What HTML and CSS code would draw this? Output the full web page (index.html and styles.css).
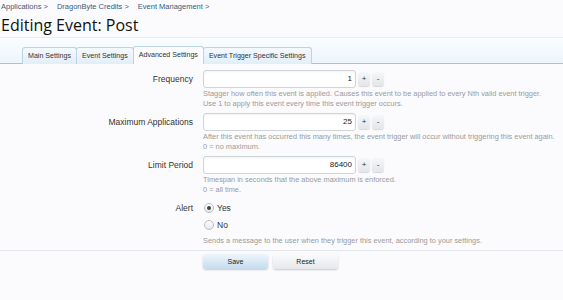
FILE: index.html
```html
<!DOCTYPE html>
<html>
<head>
<meta charset="utf-8">
<link rel="stylesheet" href="styles.css">
</head>
<body>
<div class="crumbs">
  <span>Applications &gt;</span>
  <span>DragonByte Credits &gt;</span>
  <span>Event Management &gt;</span>
</div>
<h1 class="title">Editing Event: Post</h1>
<div class="tabbar">
  <div class="tab">Main Settings</div>
  <div class="tab">Event Settings</div>
  <div class="tab active">Advanced Settings</div>
  <div class="tab">Event Trigger Specific Settings</div>
</div>
<form class="form">
  <div class="row">
    <div class="label">Frequency</div>
    <div class="ctrl">
      <div class="spin"><div class="input">1</div><span class="sbtn">+</span><span class="sbtn">-</span></div>
      <div class="explain">Stagger how often this event is applied. Causes this event to be applied to every Nth valid event trigger.<br>Use 1 to apply this event every time this event trigger occurs.</div>
    </div>
  </div>
  <div class="row">
    <div class="label">Maximum Applications</div>
    <div class="ctrl">
      <div class="spin"><div class="input">25</div><span class="sbtn">+</span><span class="sbtn">-</span></div>
      <div class="explain">After this event has occurred this many times, the event trigger will occur without triggering this event again.<br>0 = no maximum.</div>
    </div>
  </div>
  <div class="row">
    <div class="label">Limit Period</div>
    <div class="ctrl">
      <div class="spin"><div class="input">86400</div><span class="sbtn">+</span><span class="sbtn">-</span></div>
      <div class="explain">Timespan in seconds that the above maximum is enforced.<br>0 = all time.</div>
    </div>
  </div>
  <div class="row last">
    <div class="label alabel">Alert</div>
    <div class="ctrl">
      <div class="radio"><span class="dot on"></span>Yes</div>
      <div class="radio"><span class="dot"></span>No</div>
      <div class="explain">Sends a message to the user when they trigger this event, according to your settings.</div>
    </div>
  </div>
  <div class="submit">
    <span class="button primary">Save</span>
    <span class="button">Reset</span>
  </div>
</form>
</body>
</html>
```
FILE: styles.css
```css
html, body { margin: 0; padding: 0; }
body {
  background: #fbfbfd;
  font-family: "Liberation Sans", Arial, sans-serif;
  color: #222;
  width: 563px;
  height: 300px;
  overflow: hidden;
}
.crumbs {
  font-size: 7.5px;
  color: #3a5a7a;
  padding: 2px 0 0 1px;
  height: 10px;
  line-height: 10px;
  display: flex;
  gap: 9px;
}
.title {
  margin: 3px 0 0 1px;
  font-family: "Open Sans", sans-serif;
  font-weight: normal;
  font-size: 16px;
  line-height: 20px;
  color: #111;
  height: 20px;
}
.tabbar {
  margin-top: 2px;
  height: 25px;
  border-top: 1px solid #e9eef3;
  border-bottom: 1px solid #aac3d6;
  background: linear-gradient(#fbfdff, #edf5fb);
  display: flex;
  align-items: flex-end;
  padding-left: 22px;
}
.tab {
  height: 16px;
  line-height: 16px;
  font-size: 7.1px;
  padding: 0 5px;
  border: 1px solid #bcd3e4;
  border-bottom: none;
  border-radius: 3px 3px 0 0;
  background: linear-gradient(#f4f9fd, #e2eef7);
  color: #333;
  margin-right: -1px;
  position: relative;
  top: 1px;
  white-space: nowrap;
}
.tab.active {
  background: #fbfbfd;
  height: 17px;
  z-index: 1;
}
.form { margin: 0; padding-top: 6px; }
.row {
  display: grid;
  grid-template-columns: 193px 1fr;
  column-gap: 10px;
  margin-bottom: 4px;
}
.row.last { margin-bottom: 4px; padding-top: 2px; }
.label {
  text-align: right;
  font-size: 8.5px;
  line-height: 18px;
  color: #333;
}
.alabel { line-height: 14px; }
.spin { display: flex; align-items: center; height: 18px; }
.input {
  width: 148px;
  height: 16px;
  border: 1px solid #cfd4d9;
  border-radius: 3px;
  background: #fff;
  font-size: 8px;
  line-height: 16px;
  text-align: right;
  padding-right: 3px;
  color: #222;
  box-shadow: inset 0 1px 2px rgba(0,0,0,0.05);
}
.sbtn {
  width: 12px;
  height: 14px;
  margin-left: 2px;
  border-radius: 3px;
  background: linear-gradient(#f6f7f8, #e3e5e8);
  box-shadow: 0 1px 1px rgba(0,0,0,0.15);
  font-size: 8px;
  line-height: 14px;
  text-align: center;
  color: #333;
}
.explain {
  font-size: 7.4px;
  line-height: 10px;
  color: #9a9a9a;
  padding-top: 1px;
}
.radio {
  display: flex;
  align-items: center;
  height: 14px;
  font-size: 8.5px;
  color: #333;
  margin-bottom: 3px;
}
.dot {
  width: 8px;
  height: 8px;
  border: 1px solid #b9bec3;
  border-radius: 50%;
  background: linear-gradient(#fff, #e6e8ea);
  margin: 0 3px 0 1px;
  position: relative;
}
.dot.on::after {
  content: "";
  position: absolute;
  left: 2px; top: 2px;
  width: 4px; height: 4px;
  border-radius: 50%;
  background: #444;
}
.submit {
  border-top: 1px solid #e3e6ea;
  padding: 3px 0 0 203px;
  display: flex;
  gap: 5px;
}
.button {
  width: 65px;
  height: 15px;
  line-height: 15px;
  text-align: center;
  font-size: 7px;
  border-radius: 3px;
  background: linear-gradient(#fbfbfc, #e6e8eb);
  box-shadow: 0 1px 2px rgba(0,0,0,0.2);
  color: #222;
}
.button.primary {
  background: linear-gradient(#eef5fb, #c5dcee);
}
```
